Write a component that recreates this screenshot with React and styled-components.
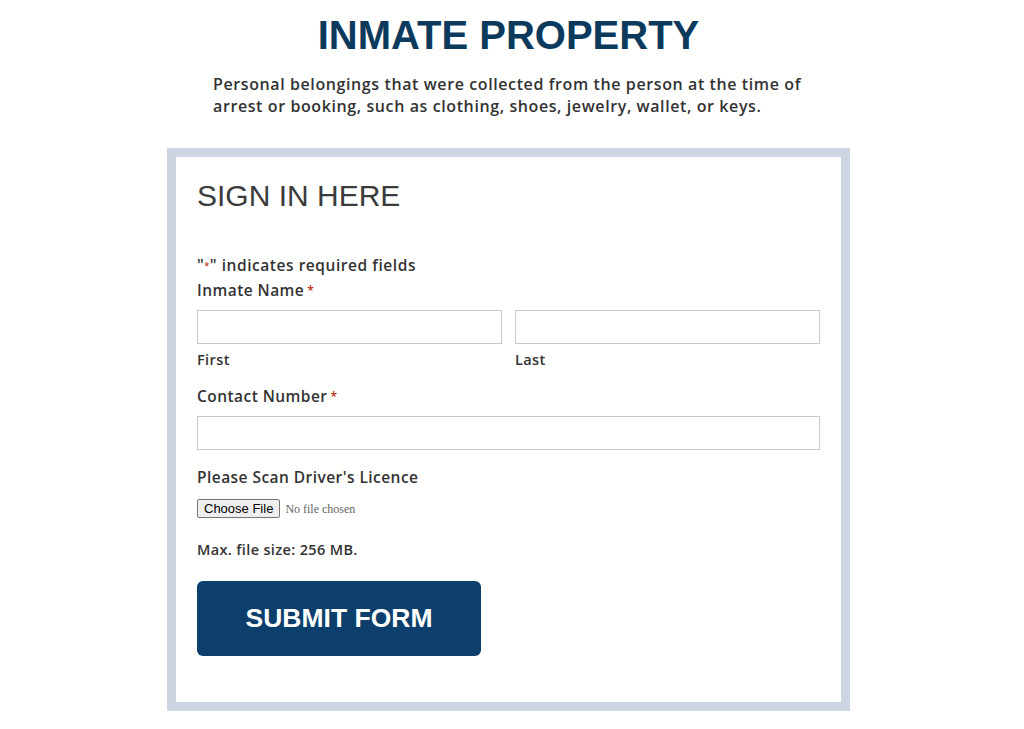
import React from "react";
import styled, { createGlobalStyle } from "styled-components";

const GlobalStyle = createGlobalStyle`
  html, body {
    margin: 0;
    padding: 0;
    background: #ffffff;
  }
  body {
    font-family: "Open Sans", "Liberation Sans", sans-serif;
    color: #333333;
  }
`;

const Page = styled.div`
  width: 1017px;
  display: flex;
  flex-direction: column;
  align-items: center;
  padding-top: 12px;
`;

const Title = styled.h1`
  margin: 0;
  font-family: "Liberation Sans", Arial, sans-serif;
  font-size: 40px;
  font-weight: 700;
  line-height: 46px;
  color: #0b3a5d;
`;

const Intro = styled.p`
  width: 591px;
  margin: 15px 0 0;
  font-size: 16px;
  font-weight: 600;
  letter-spacing: 0.6px;
  line-height: 22px;
  color: #333333;
`;

const Frame = styled.section`
  box-sizing: border-box;
  width: 683px;
  margin-top: 31px;
  border: 9px solid #ccd5e1;
  background: #ffffff;
  padding: 22px 21px 46px 21px;
`;

const FormTitle = styled.h2`
  margin: 0;
  font-family: "Liberation Sans", Arial, sans-serif;
  font-size: 30px;
  font-weight: 400;
  line-height: 34px;
  color: #3b3b3b;
`;

const Legend = styled.p`
  margin: 42px 0 0;
  font-size: 15.5px;
  font-weight: 600;
  letter-spacing: 0.55px;
  line-height: 20px;
`;

const Star = styled.span`
  color: #c02b0a;
  font-size: ${(p) => (p.$small ? "9px" : "12px")};
  vertical-align: ${(p) => (p.$small ? "2px" : "1px")};
  margin-left: ${(p) => (p.$small ? "0" : "3px")};
`;

const Field = styled.div`
  display: flex;
  flex-direction: column;
  align-items: stretch;
  margin-top: ${(p) => p.$top || "0"};
`;

const Label = styled.div`
  font-size: 15.5px;
  font-weight: 600;
  letter-spacing: 0.45px;
  line-height: 20px;
  margin-bottom: 9px;
`;

const Split = styled.div`
  display: grid;
  grid-template-columns: 1fr 1fr;
  column-gap: 13px;
`;

const TextInput = styled.input`
  box-sizing: border-box;
  display: block;
  width: 100%;
  height: 34px;
  border: 1px solid #c9c9c9;
  border-radius: 0;
  background: #ffffff;
  padding: 0 8px;
  font-size: 14px;
  outline: none;
`;

const SubLabel = styled.div`
  margin-top: 6px;
  font-size: 14.5px;
  font-weight: 600;
  letter-spacing: 0.4px;
  line-height: 19px;
`;

const FileInput = styled.input`
  align-self: flex-start;
  font-family: "Liberation Serif", serif;
  font-size: 12px;
  color: #666666;
  margin: 3px 0 0;

  &::file-selector-button {
    font-family: "Liberation Sans", Arial, sans-serif;
    font-size: 13px;
    color: #000000;
    background: #efefef;
    border: 1px solid #767676;
    border-radius: 2px;
    padding: 1px 6px;
    margin-right: 5px;
  }
`;

const Note = styled.p`
  margin: 22px 0 0;
  font-size: 14.5px;
  font-weight: 600;
  letter-spacing: 0.35px;
  line-height: 19px;
`;

const SubmitButton = styled.button`
  margin-top: 22px;
  width: 284px;
  height: 75px;
  border: none;
  border-radius: 6px;
  background: #0d3f6d;
  color: #ffffff;
  font-family: "Liberation Sans", Arial, sans-serif;
  font-size: 26.5px;
  font-weight: 700;
  cursor: pointer;
`;

export default function App() {
  return (
    <>
      <GlobalStyle />
      <Page>
        <Title>INMATE PROPERTY</Title>
        <Intro>
          Personal belongings that were collected from the person at the time of
          arrest or booking, such as clothing, shoes, jewelry, wallet, or keys.
        </Intro>
        <Frame>
          <FormTitle>SIGN IN HERE</FormTitle>
          <Legend>
            "<Star $small>*</Star>" indicates required fields
          </Legend>
          <Field $top="4px">
            <Label>
              Inmate Name<Star>*</Star>
            </Label>
            <Split>
              <div>
                <TextInput type="text" aria-label="First" />
                <SubLabel>First</SubLabel>
              </div>
              <div>
                <TextInput type="text" aria-label="Last" />
                <SubLabel>Last</SubLabel>
              </div>
            </Split>
          </Field>
          <Field $top="17px">
            <Label>
              Contact Number<Star>*</Star>
            </Label>
            <TextInput type="tel" aria-label="Contact Number" />
          </Field>
          <Field $top="17px">
            <Label>Please Scan Driver's Licence</Label>
            <FileInput type="file" aria-label="Driver's Licence" />
          </Field>
          <Note>Max. file size: 256 MB.</Note>
          <SubmitButton type="submit">SUBMIT FORM</SubmitButton>
        </Frame>
      </Page>
    </>
  );
}
